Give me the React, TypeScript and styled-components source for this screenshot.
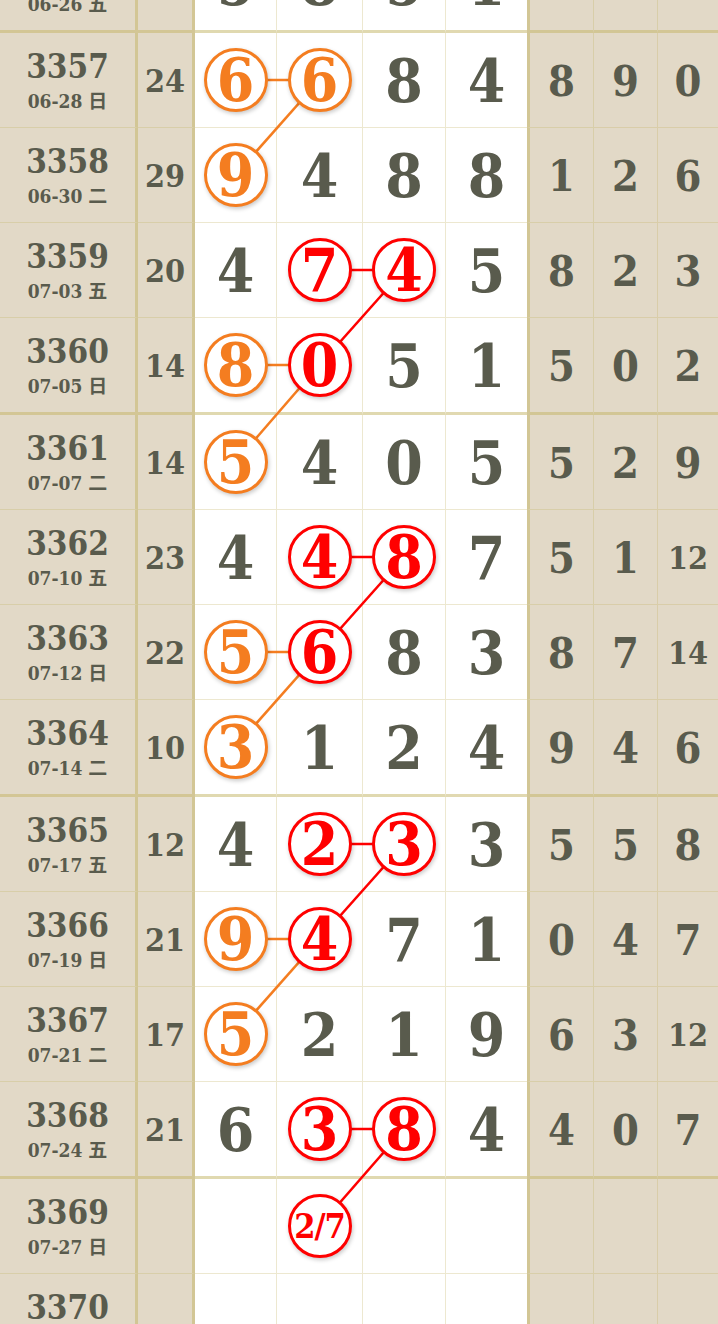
import styled, { createGlobalStyle } from "styled-components";

type Mark = "o" | "r" | undefined;

interface Draw {
  period: string;
  date: string;
  week: string;
  sum?: string;
  nums: string[];
  marks?: Mark[];
  tail?: string[];
}

const rows: Draw[] = [
  { period: "3356", date: "06-26", week: "五", nums: ["5", "8", "5", "1"] },
  { period: "3357", date: "06-28", week: "日", sum: "24", nums: ["6", "6", "8", "4"], marks: ["o", "o"], tail: ["8", "9", "0"] },
  { period: "3358", date: "06-30", week: "二", sum: "29", nums: ["9", "4", "8", "8"], marks: ["o"], tail: ["1", "2", "6"] },
  { period: "3359", date: "07-03", week: "五", sum: "20", nums: ["4", "7", "4", "5"], marks: [undefined, "r", "r"], tail: ["8", "2", "3"] },
  { period: "3360", date: "07-05", week: "日", sum: "14", nums: ["8", "0", "5", "1"], marks: ["o", "r"], tail: ["5", "0", "2"] },
  { period: "3361", date: "07-07", week: "二", sum: "14", nums: ["5", "4", "0", "5"], marks: ["o"], tail: ["5", "2", "9"] },
  { period: "3362", date: "07-10", week: "五", sum: "23", nums: ["4", "4", "8", "7"], marks: [undefined, "r", "r"], tail: ["5", "1", "12"] },
  { period: "3363", date: "07-12", week: "日", sum: "22", nums: ["5", "6", "8", "3"], marks: ["o", "r"], tail: ["8", "7", "14"] },
  { period: "3364", date: "07-14", week: "二", sum: "10", nums: ["3", "1", "2", "4"], marks: ["o"], tail: ["9", "4", "6"] },
  { period: "3365", date: "07-17", week: "五", sum: "12", nums: ["4", "2", "3", "3"], marks: [undefined, "r", "r"], tail: ["5", "5", "8"] },
  { period: "3366", date: "07-19", week: "日", sum: "21", nums: ["9", "4", "7", "1"], marks: ["o", "r"], tail: ["0", "4", "7"] },
  { period: "3367", date: "07-21", week: "二", sum: "17", nums: ["5", "2", "1", "9"], marks: ["o"], tail: ["6", "3", "12"] },
  { period: "3368", date: "07-24", week: "五", sum: "21", nums: ["6", "3", "8", "4"], marks: [undefined, "r", "r"], tail: ["4", "0", "7"] },
  { period: "3369", date: "07-27", week: "日", nums: ["", "2/7", "", ""], marks: [undefined, "r"] },
  { period: "3370", date: "07-29", week: "二", nums: ["", "", "", ""] },
];

// [colour, [row, col], [row, col]]
const links: ["o" | "r", [number, number], [number, number]][] = [
  ["o", [1, 0], [1, 1]],
  ["o", [1, 1], [2, 0]],
  ["r", [3, 1], [3, 2]],
  ["r", [3, 2], [4, 1]],
  ["o", [4, 0], [4, 1]],
  ["o", [4, 1], [5, 0]],
  ["r", [6, 1], [6, 2]],
  ["r", [6, 2], [7, 1]],
  ["o", [7, 0], [7, 1]],
  ["o", [7, 1], [8, 0]],
  ["r", [9, 1], [9, 2]],
  ["r", [9, 2], [10, 1]],
  ["o", [10, 0], [10, 1]],
  ["o", [10, 1], [11, 0]],
  ["r", [12, 1], [12, 2]],
  ["r", [12, 2], [13, 1]],
];

const ORANGE = "#f47d20";
const RED = "#f00";
const INK = "#595b4d";
const BEIGE = "#e2d9c7";
const THIN = "rgba(195, 180, 100, 0.3)";
const THICK = "rgba(195, 180, 100, 0.5)";

const colCenters = [235.5, 319.5, 404, 486.5];
const isGroupEnd = (i: number) => i % 4 === 0;
const rowHeight = (i: number) => (isGroupEnd(i) ? 97 : 95);

const rowTops: number[] = [];
rows.reduce((top, _, i) => {
  rowTops.push(top);
  return top + rowHeight(i);
}, 0);
const totalHeight = rowTops[rowTops.length - 1] + rowHeight(rows.length - 1);

const GlobalStyle = createGlobalStyle`
  html, body {
    margin: 0;
    padding: 0;
    background: #fff;
    overflow: hidden;
  }
`;

export default function App() {
  return (
    <>
      <GlobalStyle />
      <Table>
        {rows.map((r, i) => (
          <Row key={r.period} $thick={isGroupEnd(i)}>
            <Side $right={3}>
              <Period>{r.period}</Period>
              <DateLine>
                {r.date} <Week>{r.week}</Week>
              </DateLine>
            </Side>
            <Side $right={3}>{r.sum && <Sum $small>{r.sum}</Sum>}</Side>
            {r.nums.map((n, c) => {
              const mark = r.marks?.[c];
              return (
                <Main key={c} $right={c < 3 ? 1 : 0}>
                  {mark ? (
                    <Ball $tone={mark === "o" ? ORANGE : RED} $small={n.length > 1}>
                      {n}
                    </Ball>
                  ) : (
                    <Big>{n}</Big>
                  )}
                </Main>
              );
            })}
            {[0, 1, 2].map((c) => (
              <Side key={c} $right={c < 2 ? 1 : 0} $left={c === 0 ? 3 : 0}>
                {r.tail && <Sum $small={r.tail[c].length > 1}>{r.tail[c]}</Sum>}
              </Side>
            ))}
          </Row>
        ))}
        <Links width={718} height={totalHeight}>
          {links.map(([tone, a, b], k) => (
            <line
              key={k}
              x1={colCenters[a[1]]}
              y1={rowTops[a[0]] + 47}
              x2={colCenters[b[1]]}
              y2={rowTops[b[0]] + 47}
              stroke={tone === "o" ? ORANGE : RED}
              strokeWidth={2.6}
            />
          ))}
        </Links>
      </Table>
    </>
  );
}

const Table = styled.div`
  position: relative;
  width: 718px;
  margin-top: -64px;
  font-family: "DejaVu Serif Condensed", "DejaVu Serif", "Noto Sans CJK SC", serif;
  font-weight: bold;
  color: ${INK};
`;

const Row = styled.div<{ $thick: boolean }>`
  display: grid;
  grid-template-columns: 138px 57px 82px 86px 83px 81px 67px 64px 60px;
  height: ${(p) => (p.$thick ? 97 : 95)}px;

  & > div {
    border-bottom: ${(p) => (p.$thick ? `3px solid ${THICK}` : `1px solid ${THIN}`)};
  }
`;

const Cell = styled.div<{ $right?: number; $left?: number }>`
  box-sizing: border-box;
  display: flex;
  flex-direction: column;
  align-items: center;
  justify-content: center;
  border-right: ${(p) => (p.$right ? `${p.$right}px solid ${p.$right > 1 ? THICK : THIN}` : "none")};
  border-left: ${(p) => (p.$left ? `${p.$left}px solid ${THICK}` : "none")};
`;

const Side = styled(Cell)`
  background: ${BEIGE};
`;

const Main = styled(Cell)`
  background: #fff;
`;

const Period = styled.div`
  font-size: 33px;
  line-height: 36px;
  margin-top: 2px;
`;

const DateLine = styled.div`
  font-size: 19px;
  line-height: 24px;
  margin-top: 3px;
  white-space: nowrap;
`;

const Week = styled.span`
  font-family: "Noto Sans CJK SC", sans-serif;
  font-weight: bold;
`;

const Sum = styled.div<{ $small?: boolean }>`
  font-size: ${(p) => (p.$small ? 32 : 43)}px;
  line-height: 1;
  margin-top: 2px;
`;

const Big = styled.div`
  font-size: 60px;
  line-height: 1;
  margin-top: 2px;
`;

const Ball = styled.div<{ $tone: string; $small?: boolean }>`
  position: relative;
  z-index: 2;
  box-sizing: border-box;
  width: 64px;
  height: 64px;
  border-radius: 50%;
  border: 3px solid ${(p) => p.$tone};
  background: #fff;
  color: ${(p) => p.$tone};
  display: flex;
  align-items: center;
  justify-content: center;
  font-size: ${(p) => (p.$small ? 34 : 60)}px;
  line-height: 1;
  box-shadow: 1px 2px 4px rgba(0, 0, 0, 0.22);
  letter-spacing: ${(p) => (p.$small ? "-1px" : "0")};
`;

const Links = styled.svg`
  position: absolute;
  left: 0;
  top: 0;
  z-index: 1;
  pointer-events: none;
`;
